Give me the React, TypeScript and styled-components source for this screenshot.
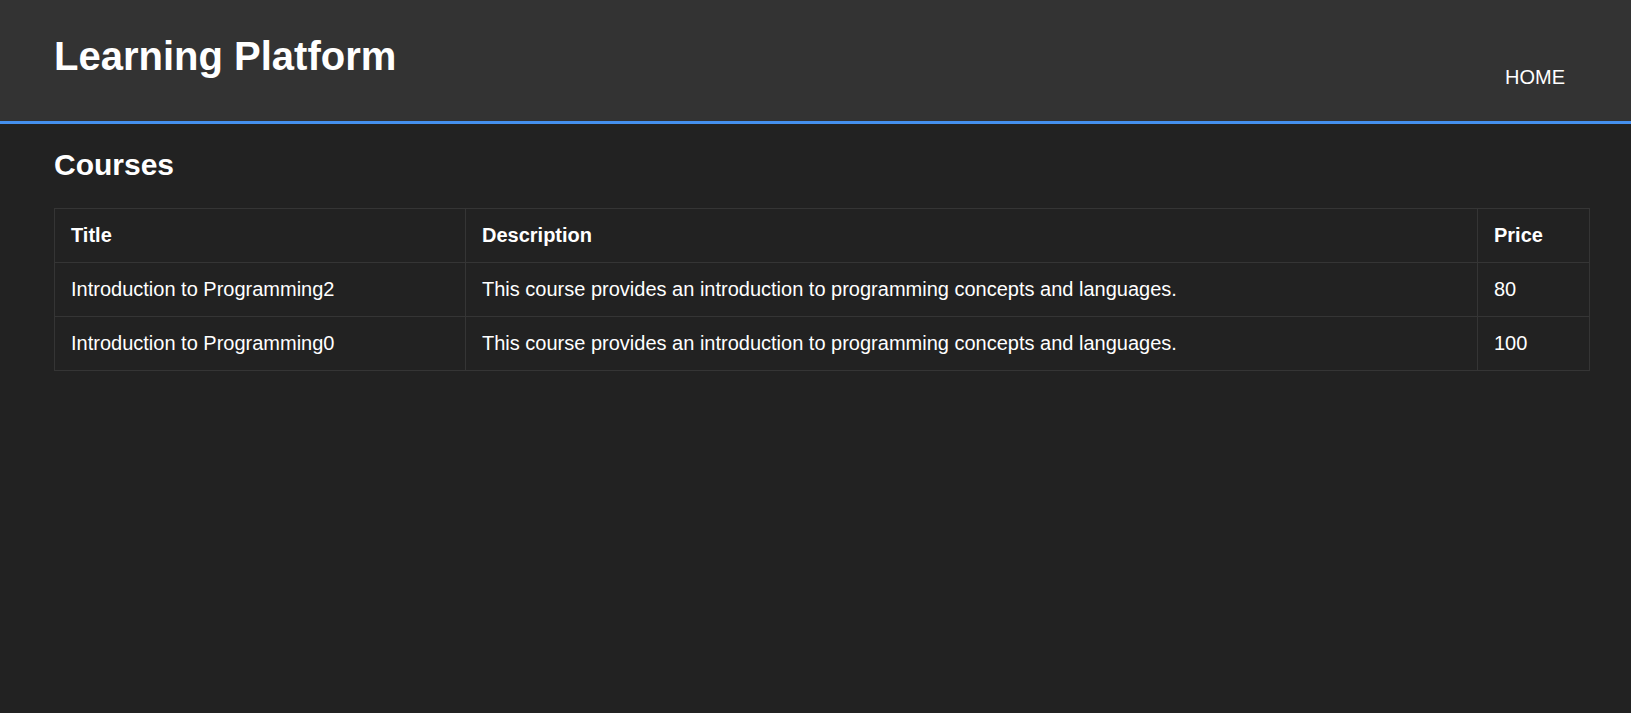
import React from 'react';
import styled, { createGlobalStyle } from 'styled-components';

interface ICourse {
    title: string
    description: string
    price: number
}

const courses: ICourse[] = [
    { title: 'Introduction to Programming2', description: 'This course provides an introduction to programming concepts and languages.', price: 80 },
    { title: 'Introduction to Programming0', description: 'This course provides an introduction to programming concepts and languages.', price: 100 },
];

const GlobalStyle = createGlobalStyle`
    html, body {
        margin: 0;
        padding: 0;
        background: #222222;
        color: #ffffff;
        font-family: "Liberation Sans", Arial, sans-serif;
    }
    body {
        min-height: 100vh;
    }
`;

const Header = styled.header`
    display: flex;
    justify-content: space-between;
    align-items: flex-start;
    height: 88px;
    padding: 33px 66px 0 54px;
    background: #333333;
    border-bottom: 3px solid #4590ee;
`;

const Brand = styled.h1`
    margin: 0;
    font-size: 40px;
    font-weight: bold;
    line-height: 46px;
`;

const Nav = styled.nav`
    display: flex;
    gap: 20px;
    padding-top: 33px;
`;

const NavLink = styled.a`
    color: #ffffff;
    font-size: 20px;
    line-height: 23px;
    text-decoration: none;
    text-transform: uppercase;
    cursor: pointer;
`;

const Main = styled.main`
    padding: 23px 42px 0 54px;
`;

const PageTitle = styled.h2`
    margin: 0 0 26px;
    font-size: 30px;
    font-weight: bold;
    line-height: 35px;
`;

const Table = styled.table`
    width: 100%;
    border-collapse: collapse;
    table-layout: fixed;
`;

const Cell = styled.td<{ $head?: boolean }>`
    padding: 15px 15px 15px 16px;
    border: 1px solid #353535;
    font-size: 20px;
    line-height: 23px;
    font-weight: ${ p => p.$head ? 'bold' : 'normal' };
    text-align: left;
`;

const Col = styled.col<{ $width: number }>`
    width: ${ p => p.$width }px;
`;

export default function App() {
    return (<>
        <GlobalStyle />
        <Header>
            <Brand>Learning Platform</Brand>
            <Nav>
                <NavLink href="#">Home</NavLink>
            </Nav>
        </Header>
        <Main>
            <PageTitle>Courses</PageTitle>
            <Table>
                <colgroup>
                    <Col $width={ 411 } />
                    <Col $width={ 1012 } />
                    <Col $width={ 112 } />
                </colgroup>
                <thead>
                    <tr>
                        <Cell as="th" $head>Title</Cell>
                        <Cell as="th" $head>Description</Cell>
                        <Cell as="th" $head>Price</Cell>
                    </tr>
                </thead>
                <tbody>
                    { courses.map((el, index) => (<tr key={ index }>
                        <Cell>{ el.title }</Cell>
                        <Cell>{ el.description }</Cell>
                        <Cell>{ el.price }</Cell>
                    </tr>)) }
                </tbody>
            </Table>
        </Main>
    </>);
}
